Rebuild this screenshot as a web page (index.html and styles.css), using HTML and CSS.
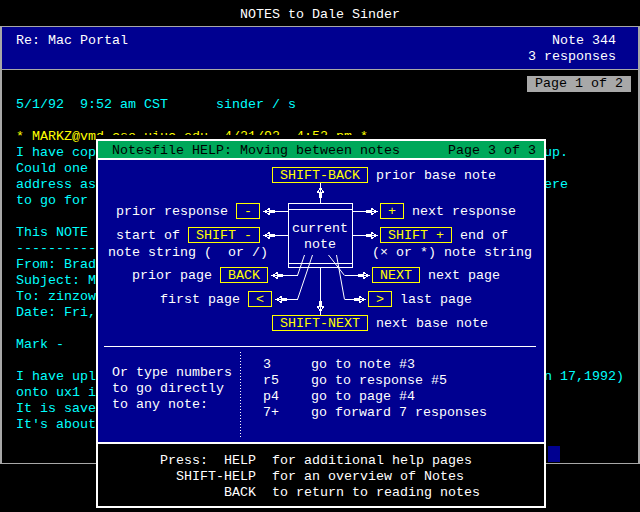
FILE: index.html
```html
<!DOCTYPE html>
<html>
<head>
<meta charset="utf-8">
<title>NOTES to Dale Sinder</title>
<link rel="stylesheet" href="styles.css">
</head>
<body>
<div class="title">NOTES to Dale Sinder</div>
<div class="frame">
  <div class="header">
    <div class="hrow"><span>Re: Mac Portal</span><span>Note 344</span></div>
    <div class="hrow"><span></span><span>3 responses</span></div>
  </div>
  <div class="body">
    <div class="pagebar"><span class="pagebox">Page 1 of 2</span></div>
    <div class="text">
      <div class="ln cy">5/1/92  9:52 am CST      sinder / s</div>
      <div class="ln"></div>
      <div class="ln ye">* MARKZ@vmd.cso.uiuc.edu  4/21/92  4:52 pm *</div>
      <div class="ln cy"><span class="l">I have cop</span><span class="r">up.</span></div>
      <div class="ln cy"><span class="l">Could one </span></div>
      <div class="ln cy"><span class="l">address as</span><span class="r">ere</span></div>
      <div class="ln cy"><span class="l">to go for </span></div>
      <div class="ln"></div>
      <div class="ln cy"><span class="l">This NOTE </span></div>
      <div class="ln cy"><span class="l">----------</span></div>
      <div class="ln cy"><span class="l">From: Brad</span></div>
      <div class="ln cy"><span class="l">Subject: M</span></div>
      <div class="ln cy"><span class="l">To: zinzow</span></div>
      <div class="ln cy"><span class="l">Date: Fri,</span></div>
      <div class="ln"></div>
      <div class="ln cy">Mark -</div>
      <div class="ln"></div>
      <div class="ln cy"><span class="l">I have upl</span><span class="r">n 17,1992)</span></div>
      <div class="ln cy"><span class="l">onto ux1 i</span></div>
      <div class="ln cy"><span class="l">It is save</span></div>
      <div class="ln cy"><span class="l">It's about</span></div>
    </div>
    <div class="cursor"></div>
  </div>
</div>

<div class="help">
  <div class="htitle"><span>Notesfile HELP: Moving between notes</span><span>Page 3 of 3</span></div>
  <div class="diagram">
    <svg class="diag" width="446" height="186" viewBox="98 160 446 186" xmlns="http://www.w3.org/2000/svg">
      <g fill="none" stroke="#fff" stroke-width="1" shape-rendering="crispEdges">
        <rect x="288.5" y="203.5" width="64" height="64"/>
        <line x1="288" y1="209.5" x2="353" y2="209.5"/>
        <line x1="288" y1="263.5" x2="353" y2="263.5"/>
        <line x1="320.5" y1="183" x2="320.5" y2="203"/>
        <line x1="320.5" y1="268" x2="320.5" y2="315"/>
        <line x1="264" y1="211.5" x2="288" y2="211.5"/>
        <line x1="264" y1="235.5" x2="288" y2="235.5"/>
        <line x1="353" y1="211.5" x2="377" y2="211.5"/>
        <line x1="353" y1="235.5" x2="377" y2="235.5"/>
        <polyline points="272,275.5 297.5,275.5"/>
        <polyline points="276,299.5 297.5,299.5"/>
        <polyline points="345,275.5 369,275.5"/>
        <polyline points="345,299.5 365,299.5"/>
      </g>
      <g fill="none" stroke="#fff" stroke-width="1">
        <line x1="297.5" y1="275.5" x2="304.5" y2="255"/>
        <line x1="297.5" y1="299.5" x2="312.5" y2="255"/>
        <line x1="344.5" y1="275.5" x2="328.5" y2="255"/>
        <line x1="344.5" y1="299.5" x2="336.5" y2="255"/>
      </g>
      <g fill="#fff" stroke="#fff" stroke-width="1" shape-rendering="crispEdges">
        <path d="M264 211.5 L269.5 208.5 L269.5 214.5 Z" fill="none"/><rect x="270" y="210" width="5" height="3" stroke="none"/>
        <path d="M264 235.5 L269.5 232.5 L269.5 238.5 Z" fill="none"/><rect x="270" y="234" width="5" height="3" stroke="none"/>
        <path d="M272 275.5 L277.5 272.5 L277.5 278.5 Z" fill="none"/><rect x="278" y="274" width="5" height="3" stroke="none"/>
        <path d="M276 299.5 L281.5 296.5 L281.5 302.5 Z" fill="none"/><rect x="282" y="298" width="5" height="3" stroke="none"/>
        <path d="M377 211.5 L371.5 208.5 L371.5 214.5 Z" fill="none"/><rect x="366" y="210" width="5" height="3" stroke="none"/>
        <path d="M377 235.5 L371.5 232.5 L371.5 238.5 Z" fill="none"/><rect x="366" y="234" width="5" height="3" stroke="none"/>
        <path d="M369 275.5 L363.5 272.5 L363.5 278.5 Z" fill="none"/><rect x="358" y="274" width="5" height="3" stroke="none"/>
        <path d="M365 299.5 L359.5 296.5 L359.5 302.5 Z" fill="none"/><rect x="354" y="298" width="5" height="3" stroke="none"/>
        <path d="M320.5 187 L317.5 192.5 L323.5 192.5 Z" fill="none"/><rect x="319" y="193" width="3" height="5" stroke="none"/>
        <path d="M320.5 312 L317.5 306.5 L323.5 306.5 Z" fill="none"/><rect x="319" y="301" width="3" height="5" stroke="none"/>
      </g>
      <g fill="none" stroke="#ffff00" stroke-width="1" shape-rendering="crispEdges">
        <rect x="272.5" y="167.5" width="95" height="15"/>
        <rect x="236.5" y="203.5" width="23" height="15"/>
        <rect x="380.5" y="203.5" width="23" height="15"/>
        <rect x="188.5" y="227.5" width="71" height="15"/>
        <rect x="380.5" y="227.5" width="71" height="15"/>
        <rect x="220.5" y="267.5" width="47" height="15"/>
        <rect x="372.5" y="267.5" width="47" height="15"/>
        <rect x="248.5" y="291.5" width="23" height="15"/>
        <rect x="368.5" y="291.5" width="23" height="15"/>
        <rect x="272.5" y="315.5" width="95" height="15"/>
      </g>
      <g class="ytext">
        <text x="280" y="179">SHIFT-BACK</text>
        <text x="244" y="215">-</text>
        <text x="388" y="215">+</text>
        <text x="196" y="239">SHIFT -</text>
        <text x="388" y="239">SHIFT +</text>
        <text x="228" y="279">BACK</text>
        <text x="380" y="279">NEXT</text>
        <text x="256" y="303">&lt;</text>
        <text x="376" y="303">&gt;</text>
        <text x="280" y="327">SHIFT-NEXT</text>
      </g>
      <g class="wtext">
        <text x="376" y="179">prior base note</text>
        <text x="116" y="215">prior response</text>
        <text x="412" y="215">next response</text>
        <text x="116" y="239">start of</text>
        <text x="460" y="239">end of</text>
        <text x="108" y="256">note string (  or /)</text>
        <text x="372" y="256">(× or *) note string</text>
        <text x="132" y="279">prior page</text>
        <text x="428" y="279">next page</text>
        <text x="160" y="303">first page</text>
        <text x="400" y="303">last page</text>
        <text x="376" y="327">next base note</text>
        <text x="292" y="232">current</text>
        <text x="304" y="248">note</text>
      </g>
    </svg>
  </div>
  <div class="sep"></div>
  <div class="lower">
    <div class="lcol">Or type numbers
to go directly
to any note:</div>
    <div class="rcol">3     go to note #3
r5    go to response #5
p4    go to page #4
7+    go forward 7 responses</div>
  </div>
  <div class="footer">Press:  HELP  for additional help pages
  SHIFT-HELP  for an overview of Notes
        BACK  to return to reading notes</div>
</div>
</body>
</html>
```
FILE: styles.css
```css
* {
  box-sizing: border-box;
  margin: 0;
  padding: 0;
}

html,
body {
  background: #000;
}

body {
  width: 640px;
  height: 512px;
  overflow: hidden;
  position: relative;
  font-family: "Liberation Mono", "DejaVu Sans Mono", monospace;
  font-size: 13.333px;
  line-height: 16px;
  color: #fff;
}

.title {
  height: 26px;
  padding-top: 7px;
  text-align: center;
  white-space: pre;
}

.frame {
  height: 438px;
  border-style: solid;
  border-color: #a8a8a8;
  border-width: 1px 2px 1px 2px;
  display: flex;
  flex-direction: column;
}

.header {
  background: #000090;
  height: 43px;
  border-bottom: 1px solid #a8a8a8;
  padding: 6px 22px 4px 14px;
}

.hrow {
  display: flex;
  justify-content: space-between;
  white-space: pre;
}

.body {
  flex: 1;
  position: relative;
  padding: 6px 7px 0 14px;
}

.pagebar {
  display: flex;
  justify-content: flex-end;
  margin-bottom: 5px;
}

.pagebox {
  background: #a8a8a8;
  color: #000;
  padding: 0 8px;
  height: 16px;
  white-space: pre;
}

.ln {
  display: flex;
  white-space: pre;
  height: 16px;
}

.ln .l {
  width: 80px;
  flex: none;
}

.ln .r {
  margin-left: 448px;
}

.cy {
  color: #00ffff;
}

.ye {
  color: #ffff00;
}

.cursor {
  position: absolute;
  left: 546px;
  top: 376px;
  width: 12px;
  height: 16px;
  background: #000090;
}

.help {
  position: absolute;
  left: 96px;
  top: 139px;
  width: 450px;
  height: 369px;
  border: 2px solid #fff;
  background: #000090;
  box-shadow: 0 -4px 0 #000;
  display: flex;
  flex-direction: column;
}

.htitle {
  background: #00a85a;
  color: #000;
  height: 19px;
  border-bottom: 2px solid #fff;
  padding: 1px 8px 0 14px;
  display: flex;
  justify-content: space-between;
  white-space: pre;
  line-height: 17px;
}

.diagram {
  height: 186px;
  position: relative;
}

.diag {
  display: block;
}

.diag text {
  font-family: "Liberation Mono", "DejaVu Sans Mono", monospace;
  font-size: 13.333px;
  white-space: pre;
}

.ytext text {
  fill: #ffff00;
}

.wtext text {
  fill: #fff;
}

.sep {
  height: 1px;
  background: #fff;
  margin: 0 8px 0 6px;
}

.lower {
  height: 95px;
  display: flex;
  padding-top: 5px;
}

.lcol {
  width: 142px;
  padding: 13px 0 0 14px;
  white-space: pre;
}

.rcol {
  height: 86px;
  flex: 1;
  padding: 5px 0 0 23px;
  white-space: pre;
  background-image: repeating-linear-gradient(to bottom, #fff 0 1px, transparent 1px 3px);
  background-size: 1px 100%;
  background-repeat: no-repeat;
  background-position: 0 0;
}

.footer {
  flex: 1;
  background: #000;
  border-top: 2px solid #fff;
  padding: 9px 0 0 62px;
  white-space: pre;
}
```
